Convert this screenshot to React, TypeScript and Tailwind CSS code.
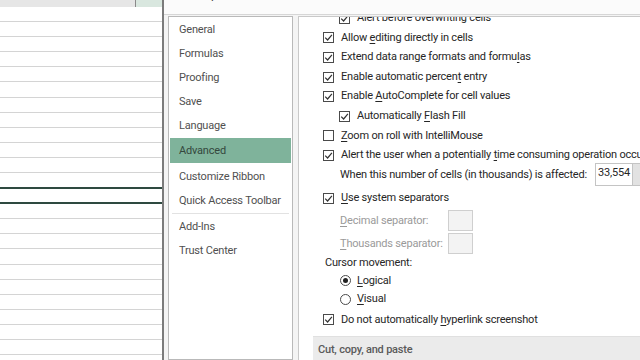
import React from 'react'

const FONT = { fontFamily: 'Roboto, "Open Sans", Arial, sans-serif' }

// sheet rows in the background (left of the dialog)
function Sheet() {
  const rows = Array.from({ length: 23 }, (_, i) => i)
  return (
    <div className="w-[162px] shrink-0 flex flex-col bg-white overflow-hidden">
      <div className="h-[7px] shrink-0 flex bg-[#e6e6e6]">
        <div className="w-[136px] border-r border-[#8a8a8a]" />
        <div className="flex-1 bg-[#d9e7df]" />
      </div>
      {rows.map((i) =>
        i === 12 ? (
          <div key={i} className="h-[17px] -mt-[1px] shrink-0 border-y-2 border-[#2e4a40]" />
        ) : (
          <div key={i} className="h-[15.1px] shrink-0 border-b border-[#d4d4d4]" />
        )
      )}
    </div>
  )
}

function CheckBox({ checked = true }: { checked?: boolean }) {
  return (
    <span className="w-[11px] h-[11px] shrink-0 border border-[#4a4a4a] bg-white flex items-center justify-center">
      {checked && (
        <svg width="9" height="9" viewBox="0 0 9 9">
          <path d="M1.2 4.6 L3.6 7 L7.9 1.8" fill="none" stroke="#333" strokeWidth="1.2" />
        </svg>
      )}
    </span>
  )
}

function Radio({ checked = false }: { checked?: boolean }) {
  return (
    <span className="w-[11px] h-[11px] shrink-0 rounded-full border border-[#4a4a4a] bg-white flex items-center justify-center">
      {checked && <span className="w-[5px] h-[5px] rounded-full bg-[#222]" />}
    </span>
  )
}

function Row({
  children,
  checked = true,
  indent = false,
  h = 'h-[19.6px]',
}: {
  children: React.ReactNode
  checked?: boolean
  indent?: boolean
  h?: string
}) {
  return (
    <div className={`${h} shrink-0 flex items-center gap-[7px] ${indent ? 'pl-[40px]' : 'pl-[24px]'}`}>
      <CheckBox checked={checked} />
      <span className="whitespace-nowrap">{children}</span>
    </div>
  )
}

const U = ({ children }: { children: React.ReactNode }) => (
  <u className="underline underline-offset-[2px] decoration-[1px]">{children}</u>
)

const navItems = ['General', 'Formulas', 'Proofing', 'Save', 'Language']

export default function App() {
  return (
    <div className="w-[640px] h-[360px] flex overflow-hidden bg-white text-[#262626] tracking-[-0.2px]" style={FONT}>
      <Sheet />
      <div className="w-[2px] shrink-0 bg-[#7b7b7b]" />

      {/* Excel Options dialog */}
      <div className="flex-1 min-w-0 flex flex-col bg-[#f4f4f4]">
        <div className="h-[15px] shrink-0 border-b border-[#d6d6d6] bg-[#fbfbfb] overflow-hidden">
          <div className="-mt-[15px] pl-[9px] text-[12px] text-[#444] whitespace-nowrap">Excel Options</div>
        </div>

        <div className="flex-1 min-h-0 flex pl-[4px] pt-[1px] gap-[5px]">
          {/* left nav */}
          <div className="w-[125px] shrink-0 border border-[#b9b9b9] bg-white pt-[1px] text-[11px] text-[#505050]">
            {navItems.map((n) => (
              <div key={n} className="h-[24px] flex items-center pl-[10px] pt-[1px]">
                {n}
              </div>
            ))}
            <div className="h-[25px] mx-[1px] flex items-center pl-[9px] pt-[1px] bg-[#7fb39b] text-[#34473d]">Advanced</div>
            <div className="h-[25px] mt-[1px] flex items-center pl-[10px] pt-[1px]">Customize Ribbon</div>
            <div className="h-[24px] flex items-center pl-[10px] pt-[1px]">Quick Access Toolbar</div>
            <div className="mx-[3px] border-t border-[#e2e2e2] mb-[1px]" />
            <div className="h-[24px] flex items-center pl-[10px] pt-[1px]">Add-Ins</div>
            <div className="h-[24px] flex items-center pl-[10px] pt-[1px]">Trust Center</div>
          </div>

          {/* right content */}
          <div className="flex-1 min-w-0 border-l border-t border-[#c9c9c9] bg-white overflow-hidden text-[11px]">
            <div className="-mt-[8.5px] flex flex-col">
              <Row indent>
                Alert before overwriting cells
              </Row>
              <Row>
                Allow <U>e</U>diting directly in cells
              </Row>
              <Row>
                Extend data range formats and formu<U>l</U>as
              </Row>
              <Row>
                Enable automatic percen<U>t</U> entry
              </Row>
              <Row>
                Enable <U>A</U>utoComplete for cell values
              </Row>
              <Row indent>
                Automatically <U>F</U>lash Fill
              </Row>
              <Row checked={false}>
                <U>Z</U>oom on roll with IntelliMouse
              </Row>
              <Row>
                Alert the user when a potentially <U>t</U>ime consuming operation occurs
              </Row>

              <div className="h-[19px] shrink-0 flex items-center pl-[41px]">
                <span className="whitespace-nowrap">When this number of cells (in thousands) is affected:</span>
                <div className="ml-auto h-[23px] w-[38px] shrink-0 border border-[#c4c4c4] flex items-start pt-[1px] pl-[2px] whitespace-nowrap">
                  33,554
                </div>
                <div className="h-[23px] w-[7px] shrink-0 bg-[#e2e2e2] border-y border-[#c4c4c4]" />
              </div>

              <Row h="h-[20px] mt-[4px]">
                <U>U</U>se system separators
              </Row>
              <div className="h-[23px] shrink-0 flex items-center pl-[41px] pt-[2px] text-[#9a9a9a]">
                <span className="w-[108px] whitespace-nowrap">
                  <U>D</U>ecimal separator:
                </span>
                <span className="w-[25px] h-[21px] border border-[#cfcfcf] bg-[#f3f3f3]" />
              </div>
              <div className="h-[23px] shrink-0 flex items-center pl-[41px] pt-[2px] text-[#9a9a9a]">
                <span className="w-[108px] whitespace-nowrap">
                  <U>T</U>housands separator:
                </span>
                <span className="w-[25px] h-[21px] border border-[#cfcfcf] bg-[#f3f3f3]" />
              </div>

              <div className="h-[18px] shrink-0 flex items-center pl-[26px]">Cursor movement:</div>
              <div className="h-[17px] shrink-0 flex items-center gap-[6px] pl-[41px]">
                <Radio checked />
                <span>
                  <U>L</U>ogical
                </span>
              </div>
              <div className="h-[20px] shrink-0 flex items-center gap-[6px] pl-[41px]">
                <Radio />
                <span>
                  <U>V</U>isual
                </span>
              </div>
              <Row h="h-[21px]">
                Do not automatically <U>h</U>yperlink screenshot
              </Row>

              <div className="mt-[6px] ml-[14px] h-[26px] shrink-0 flex items-center pl-[5px] bg-[#ebebeb] border-t border-[#e0e0e0] text-[#5a5a5a] font-medium">
                Cut, copy, and paste
              </div>
            </div>
          </div>
        </div>
      </div>
    </div>
  )
}
